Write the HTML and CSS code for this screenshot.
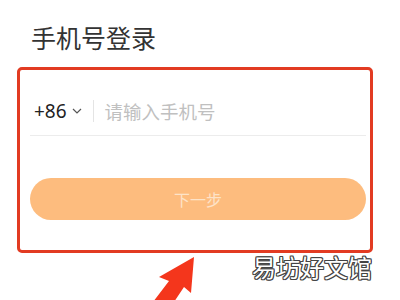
FILE: index.html
```html
<!DOCTYPE html>
<html lang="zh">
<head>
<meta charset="utf-8">
<link rel="stylesheet" href="styles.css">
</head>
<body>
<div class="page">
  <h1 class="title">手机号登录</h1>
  <div class="frame">
    <div class="row">
      <span class="code">+86</span>
      <svg class="chev" width="10" height="6" viewBox="0 0 10 6"><path d="M1 1 L5 5 L9 1" fill="none" stroke="#555" stroke-width="1.2"/></svg>
      <span class="sep"></span>
      <span class="ph">请输入手机号</span>
    </div>
    <div class="btn">下一步</div>
  </div>
  <svg class="arrow" width="60" height="50" viewBox="0 0 60 50"><polygon points="54,7 51,43 44,37 34,52 13,52 29,31 19,27" fill="#f4361c"/></svg>
  <div class="mark">易坊好文馆</div>
</div>
</body>
</html>
```
FILE: styles.css
```css
html, body { margin: 0; padding: 0; background: #fff; }
body { font-family: "Noto Sans CJK SC", "Noto Sans", sans-serif; }
.page { position: relative; width: 400px; height: 300px; overflow: hidden; }
.title {
  margin: 0;
  padding: 22px 0 0 31px;
  height: 45px;
  box-sizing: border-box;
  font-size: 25px;
  line-height: 30px;
  font-weight: 400;
  color: #333;
}
.frame {
  margin: 22px 0 0 17px;
  width: 356px;
  height: 186px;
  box-sizing: border-box;
  border: 3px solid #e23b22;
  border-radius: 5px;
  padding: 16px 4px 0 10px;
}
.row {
  display: flex;
  align-items: center;
  height: 50px;
  box-sizing: border-box;
  border-bottom: 1px solid #ececec;
  padding-left: 4px;
}
.code { font-size: 19px; color: #222; font-family: "Noto Sans", sans-serif; }
.chev { margin-left: 5px; }
.sep { width: 1px; height: 22px; background: #e4e4e4; margin: 0 11px 0 11px; }
.ph { font-size: 18.5px; color: #c0c0c0; }
.btn {
  margin-top: 42px;
  height: 42px;
  border-radius: 21px;
  background: #fdbc7e;
  color: #fde3c8;
  font-size: 16px;
  display: flex;
  align-items: center;
  justify-content: center;
}
.arrow { position: absolute; left: 140px; top: 250px; }
.mark {
  position: absolute;
  left: 252px;
  top: 252px;
  font-size: 24px;
  line-height: 30px;
  color: #fff;
  text-shadow: -1px -1px 0 #444, 1px -1px 0 #444, -1px 1px 0 #444, 1px 1px 0 #444, 0 1px 0 #444, 0 -1px 0 #444, 1px 0 0 #444, -1px 0 0 #444;
}
```
